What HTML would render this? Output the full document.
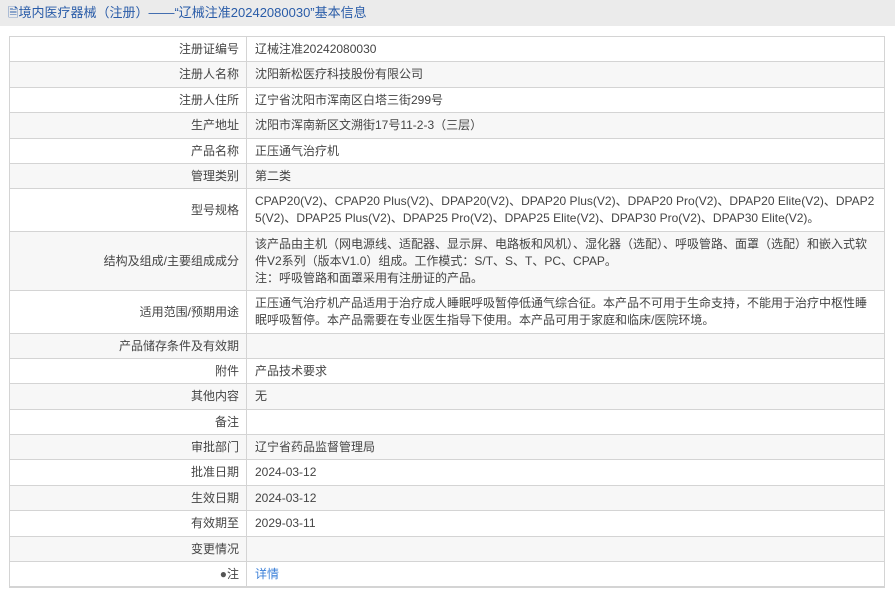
<!DOCTYPE html>
<html><head><meta charset="utf-8"><style>
body{margin:0;width:895px;height:598px;background:#fff;font-family:"Liberation Sans","Noto Sans CJK SC",sans-serif;font-size:12px;color:#444;overflow:hidden}
.hd{height:26px;background:#ebebeb;line-height:25px;padding-left:8px;font-size:13px;color:#2a5ca8}
table{position:absolute;left:9px;top:36px;width:876px;border-collapse:collapse;border-bottom:2px solid #d4d4d4}
td{border:1px solid #d4d4d4;line-height:17px;padding:4px 8px 3.4px 8px;vertical-align:middle}
td.l{width:221px;text-align:right;padding-right:7px}
tr:nth-child(even) td{background:#f7f7f7}
a{color:#3a7fd8;text-decoration:none}
</style></head><body>
<div class="hd">🗎境内医疗器械（注册）——“辽械注准20242080030”基本信息</div>
<table>
<tr><td class="l">注册证编号</td><td>辽械注准20242080030</td></tr>
<tr><td class="l">注册人名称</td><td>沈阳新松医疗科技股份有限公司</td></tr>
<tr><td class="l">注册人住所</td><td>辽宁省沈阳市浑南区白塔三街299号</td></tr>
<tr><td class="l">生产地址</td><td>沈阳市浑南新区文溯街17号11-2-3（三层）</td></tr>
<tr><td class="l">产品名称</td><td>正压通气治疗机</td></tr>
<tr><td class="l">管理类别</td><td>第二类</td></tr>
<tr><td class="l">型号规格</td><td style="word-break:break-all">CPAP20(V2)、CPAP20 Plus(V2)、DPAP20(V2)、DPAP20 Plus(V2)、DPAP20 Pro(V2)、DPAP20 Elite(V2)、DPAP25(V2)、DPAP25 Plus(V2)、DPAP25 Pro(V2)、DPAP25 Elite(V2)、DPAP30 Pro(V2)、DPAP30 Elite(V2)。</td></tr>
<tr><td class="l">结构及组成/主要组成成分</td><td>该产品由主机（网电源线、适配器、显示屏、电路板和风机）、湿化器（选配）、呼吸管路、面罩（选配）和嵌入式软件V2系列（版本V1.0）组成。工作模式：S/T、S、T、PC、CPAP。<br>注：呼吸管路和面罩采用有注册证的产品。</td></tr>
<tr><td class="l">适用范围/预期用途</td><td>正压通气治疗机产品适用于治疗成人睡眠呼吸暂停低通气综合征。本产品不可用于生命支持，不能用于治疗中枢性睡眠呼吸暂停。本产品需要在专业医生指导下使用。本产品可用于家庭和临床/医院环境。</td></tr>
<tr><td class="l">产品储存条件及有效期</td><td></td></tr>
<tr><td class="l">附件</td><td>产品技术要求</td></tr>
<tr><td class="l">其他内容</td><td>无</td></tr>
<tr><td class="l">备注</td><td></td></tr>
<tr><td class="l">审批部门</td><td>辽宁省药品监督管理局</td></tr>
<tr><td class="l">批准日期</td><td>2024-03-12</td></tr>
<tr><td class="l">生效日期</td><td>2024-03-12</td></tr>
<tr><td class="l">有效期至</td><td>2029-03-11</td></tr>
<tr><td class="l">变更情况</td><td></td></tr>
<tr><td class="l"><span style="color:#555">●</span>注</td><td><a>详情</a></td></tr>
</table>
</body></html>
